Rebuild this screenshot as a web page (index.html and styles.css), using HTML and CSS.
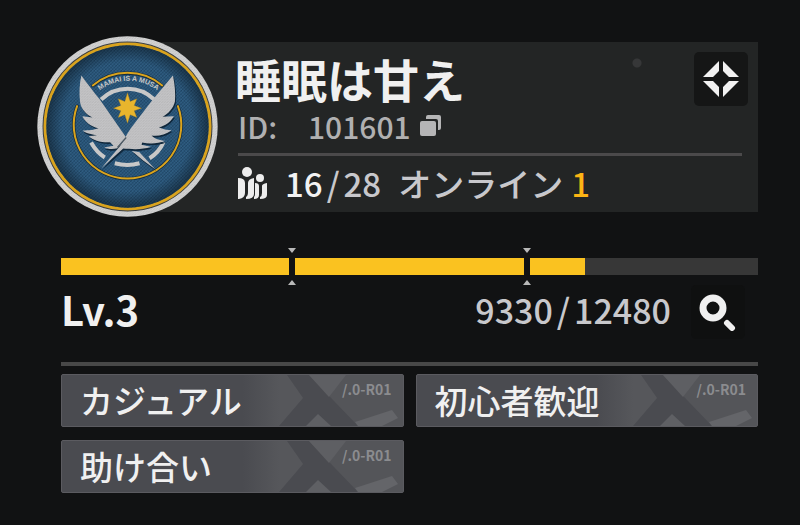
FILE: index.html
```html
<!DOCTYPE html>
<html lang="ja">

<head>
    <meta charset="UTF-8">
    <meta name="viewport" content="width=device-width, initial-scale=1.0">
    <title>睡眠は甘え</title>
    <link rel="stylesheet" href="styles.css">
</head>

<body>
    <main class="guild">
        <header class="profile">
            <svg class="emblem" viewBox="21 18 542 542" role="img" aria-label="Emblem">
                <defs>
                    <pattern id="weave" width="10" height="10" patternUnits="userSpaceOnUse">
                        <path d="M0 5L5 0M5 10L10 5" stroke="#122f4a" stroke-width="3" opacity="0.55"/>
                        <path d="M5 0L10 5M0 5L5 10" stroke="#447094" stroke-width="2" opacity="0.45"/>
                    </pattern>
                    <pattern id="thread" width="8" height="8" patternUnits="userSpaceOnUse">
                        <path d="M0 4L4 0M4 8L8 4" stroke="#777" stroke-width="2" opacity="0.45"/>
                    </pattern>
                    <radialGradient id="shade">
                        <stop offset="0.8" stop-color="#000" stop-opacity="0"/>
                        <stop offset="1" stop-color="#000" stop-opacity="0.4"/>
                    </radialGradient>
                    <path id="motto" d="M204 185A142 142 0 0 1 386 185"/>
                    <g id="wings">
                        <path d="M154 136C172 161 190 184 208 207L288 322L262 354C246 358 235 357 222 352L250 347L240 336C216 338 188 330 176 318L201 315C184 313 166 309 158 301C178 300 190 299 205 294C180 288 164 274 157 258L187 262C170 255 152 236 150 216C147 190 148 160 154 136Z"/>
                        <path d="M428 136C434 164 436 192 434 214C429 235 414 250 397 260L431 258C421 275 404 287 386 291C397 297 411 300 424 300C405 313 384 319 364 316C371 325 390 331 405 332C382 341 357 341 336 337L334 344L362 350C335 360 303 357 279 355L213 415L268 350C282 330 287 316 302 294Q362 212 428 136Z"/>
                        <path d="M305 362L327 365L375 417L338 390Z"/>
                    </g>
                </defs>
                <circle cx="292" cy="289" r="270" fill="#d6d6d6"/>
                <circle cx="292" cy="289" r="270" fill="url(#thread)"/>
                <circle cx="292" cy="289" r="253" fill="#d9a31d" stroke="#3a3d40" stroke-width="3"/>
                <circle cx="292" cy="289" r="243" fill="#2b5a7e"/>
                <circle cx="292" cy="289" r="243" fill="url(#weave)"/>
                <circle cx="292" cy="289" r="243" fill="url(#shade)"/>
                <g fill="none" stroke-linecap="round">
                    <path d="M188 167A161 161 0 0 1 396 167M141 228A161 161 0 1 0 443 228" stroke="#132c40" stroke-width="10"/>
                    <path d="M188 166A161 161 0 0 1 396 166M141 228A161 161 0 1 0 443 228" stroke="#d9a31d" stroke-width="6"/>
                    <path d="M213 208A114 114 0 0 1 372 208M183 337Q199 366 224 382M400 335Q387 366 358 384M254 399Q292 409 328 399" stroke="#c8c8c8" stroke-width="12" stroke-linecap="butt"/>
                </g>
                <text class="emblem-text"><textPath href="#motto" startOffset="50%">MAMAI IS A MUSA</textPath></text>
                <use href="#wings" fill="#10283c" x="3" y="5"/>
                <use href="#wings" fill="#c6c6c8"/>
                <use href="#wings" fill="url(#thread)"/>
                <path d="M288 322L262 352" fill="none" stroke="#4d5963" stroke-width="4"/>
                <path d="M292 188L300 214L320 206L312 226L334 234L312 242L320 262L300 254L292 279L284 254L264 262L272 242L250 234L272 226L264 206L284 214Z" fill="#e8b52d" stroke="#9a7521" stroke-width="1"/>
            </svg>
            <section class="info">
                <div class="title-row">
                    <h1 class="name">睡眠は甘え</h1>
                    <button class="icon-button" type="button" aria-label="Details">
                        <svg class="diamond" viewBox="0 0 38 38" fill="#f2f2f2">
                            <path d="M17 1V11L11 17H1ZM21 1V11L27 17H37ZM1 21H11L17 27V37ZM37 21H27L21 27V37Z"/>
                        </svg>
                    </button>
                </div>
                <div class="id-row">
                    <span class="id-label">ID:</span>
                    <span>101601</span>
                    <button class="copy-button" type="button" aria-label="Copy">
                        <svg class="copy" viewBox="0 0 22 22" fill="#b5b5b6">
                            <rect y="6" width="16" height="15" rx="2"/>
                            <path d="M6 4V2Q6 0 8 0H19Q21 0 21 2V13Q21 15 19 15H18V6Q18 4 16 4Z"/>
                        </svg>
                    </button>
                </div>
                <div class="members">
                    <svg class="people" viewBox="0 0 29 34" fill="#ededed">
                        <circle cx="9" cy="6" r="5"/>
                        <circle cx="22" cy="12" r="4"/>
                        <path d="M0 12Q7 12 7 17V27Q7 32 1 33H0ZM16 12V28Q16 33 8 33V31Q10 30 10 26V17Q10 13 16 12ZM17 17Q21 17 21 20V29Q21 33 16 33V31Q17 30 17 28ZM29 17V29Q29 33 22 33V31Q24 30 24 27V20Q24 18 29 17Z"/>
                    </svg>
                    <span class="count"><strong>16</strong><span class="slash">/</span>28</span>
                    <span>オンライン</span>
                    <span class="online">1</span>
                </div>
            </section>
        </header>

        <section class="level">
            <div class="bar" role="progressbar" aria-label="Lv.3" aria-valuenow="9330" aria-valuemin="0" aria-valuemax="12480">
                <div class="segment"><div class="fill" style="width: 100%"></div></div>
                <div class="segment"><div class="fill" style="width: 100%"></div></div>
                <div class="segment"><div class="fill" style="width: 24.3%"></div></div>
            </div>
            <div class="level-row">
                <span class="level-name">Lv.3</span>
                <span class="points">9330<span class="slash">/</span>12480</span>
                <button class="icon-button search" type="button" aria-label="Search">
                    <svg class="lens" viewBox="0 0 38 38" fill="none" stroke="#f0f0f0" stroke-linecap="round">
                        <circle cx="14" cy="15" r="10" stroke-width="7"/>
                        <path d="M28 30L33 35" stroke-width="6"/>
                    </svg>
                </button>
            </div>
        </section>

        <ul class="tags">
            <li class="tag">
                <svg class="tag-art" viewBox="0 0 160 51"><use href="#tag-art"/></svg>
                <span class="label">カジュアル</span><small class="code">/.0-R01</small>
            </li>
            <li class="tag">
                <svg class="tag-art" viewBox="0 0 160 51"><use href="#tag-art"/></svg>
                <span class="label">初心者歓迎</span><small class="code">/.0-R01</small>
            </li>
            <li class="tag">
                <svg class="tag-art" viewBox="0 0 160 51"><use href="#tag-art"/></svg>
                <span class="label">助け合い</span><small class="code">/.0-R01</small>
            </li>
        </ul>
    </main>

    <!-- shared tag background shapes -->
    <svg width="0" height="0" aria-hidden="true">
        <defs>
            <linearGradient id="fade">
                <stop offset="0" stop-color="#56575b" stop-opacity="0"/>
                <stop offset="0.6" stop-color="#56575b"/>
            </linearGradient>
            <g id="tag-art">
                <path d="M0 0H44L60 23L36 51H0Z" fill="url(#fade)"/>
                <path d="M66 0H160V51H115Z" fill="#545559"/>
                <path d="M66 0H103L86 22Z" fill="#5e5f63"/>
                <path d="M63 51L75 39L88 51Z" fill="#5f6064"/>
                <path d="M112 47L149 35L155 43L139 51H115Z" fill="#646569"/>
            </g>
        </defs>
    </svg>
</body>

</html>
```
FILE: styles.css
```css
* {
    box-sizing: border-box;
}

body {
    font-family: "Noto Sans CJK JP", sans-serif;
    font-weight: 500;
    background-color: #111213;
    color: #c8c8cc;
    margin: 0;
}

.guild {
    padding: 36px 42px 24px 61px;
}

button {
    padding: 0;
    border: none;
    cursor: pointer;
}

svg {
    display: block;
    flex-shrink: 0;
}

.profile {
    display: flex;
    align-items: center;
    margin-left: -24px;
}

.emblem {
    width: 181px;
    height: 181px;
    z-index: 1;
}

.emblem-text {
    font-family: "Liberation Sans", sans-serif;
    font-size: 21px;
    font-weight: bold;
    fill: #c8c8c8;
    text-anchor: middle;
}

.info {
    flex: 1;
    height: 170px;
    margin-left: -90px;
    padding: 10px 16px 0 107px;
    background: radial-gradient(circle at calc(100% - 121px) 21px, #363738 4px, #232525 5px);
}

.title-row {
    display: flex;
    justify-content: space-between;
    height: 60px;
}

.name {
    margin: 0;
    font-size: 46px;
    line-height: 52px;
    font-weight: bold;
    color: #f0f0f0;
}

.icon-button {
    display: flex;
    align-items: center;
    justify-content: center;
    width: 54px;
    height: 54px;
    margin-right: -6px;
    border-radius: 5px;
    background-color: #151616;
}

.diamond,
.lens {
    width: 38px;
    height: 38px;
}

.id-row {
    display: flex;
    align-items: center;
    height: 44px;
    margin-left: 3px;
    padding-bottom: 12px;
    border-bottom: 3px solid #4b4a4b;
    font-size: 30px;
    line-height: 30px;
    color: #b0b0b1;
}

.id-label {
    width: 70px;
}

.copy-button {
    margin-left: 9px;
    background: none;
}

.copy {
    width: 22px;
    height: 22px;
}

.members {
    display: flex;
    align-items: center;
    height: 54px;
    margin-left: 3px;
    font-size: 33px;
    line-height: 54px;
}

.people {
    width: 29px;
    height: 34px;
    margin-right: 18px;
}

.count {
    margin-right: 17px;
}

.count strong {
    font-weight: 500;
    color: #f2f2f2;
}

.slash {
    margin: 0 4px;
}

.online {
    margin-left: 8px;
    color: #fcb414;
}

.level {
    margin-top: 41px;
    padding-bottom: 23px;
}

.bar {
    display: grid;
    grid-template-columns: repeat(3, 1fr);
    gap: 6px;
}

.segment {
    position: relative;
    height: 17px;
    background-color: #373737;
}

.fill {
    height: 100%;
    background-color: #fac220;
}

/* little arrows above and below each gap */
.segment + .segment::before,
.segment + .segment::after {
    content: "";
    position: absolute;
    left: -7px;
    border: 4px solid transparent;
}

.segment + .segment::before {
    top: -10px;
    border-top: 5px solid #b9b9b9;
    border-bottom: none;
}

.segment + .segment::after {
    bottom: -10px;
    border-bottom: 5px solid #b9b9b9;
    border-top: none;
}

.level-row {
    display: flex;
    align-items: flex-start;
    height: 54px;
    margin-top: 10px;
    font-size: 34px;
    line-height: 50px;
}

.level-name {
    flex: 1;
    font-size: 40px;
    line-height: 48px;
    font-weight: bold;
    color: #f0f0f0;
}

.search {
    margin: 0 13px 0 20px;
    background-color: #0f1010;
}

.tags {
    display: grid;
    grid-template-columns: 1fr 1fr;
    gap: 13px 12px;
    margin: 0;
    padding: 8px 0 0;
    border-top: 4px solid #484848;
    list-style: none;
}

.tag {
    position: relative;
    display: flex;
    justify-content: space-between;
    height: 53px;
    padding: 0 11px 0 18px;
    border: 1px solid #5b5b60;
    border-radius: 2px;
    background-color: #4a4b50;
    font-size: 33px;
    line-height: 51px;
    color: #f0f0f0;
}

.tag-art {
    position: absolute;
    top: 0;
    right: 0;
    width: 160px;
    height: 51px;
}

.label,
.code {
    z-index: 1;
}

.code {
    margin-top: 4px;
    font-size: 14px;
    line-height: 20px;
    font-weight: bold;
    color: #8b8c8f;
}
```
